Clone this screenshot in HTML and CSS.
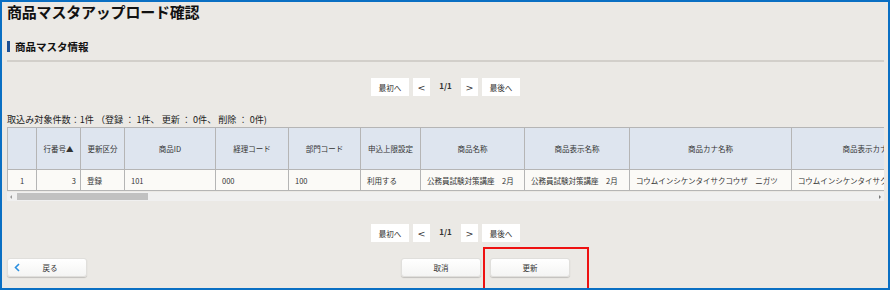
FILE: index.html
```html
<!DOCTYPE html>
<html lang="ja">
<head>
    <meta charset="utf-8">
    <title>商品マスタアップロード確認</title>
    <link rel="stylesheet" href="styles.css">
</head>
<body>
    <div class="page">
        <!-- タイトル -->
        <h1 class="title">商品マスタアップロード確認</h1>

        <!-- セクション見出し -->
        <h2 class="section-title">商品マスタ情報</h2>
        <div class="section-rule"></div>

        <div class="pager pager-top">
            <button class="pager-btn wide">最初へ</button>
            <button class="pager-btn arrow">&lt;</button>
            <span class="pager-count">1/1</span>
            <button class="pager-btn arrow">&gt;</button>
            <button class="pager-btn wide">最後へ</button>
        </div>

        <div class="summary">取込み対象件数：1件 （登録 ： 1件、 更新 ： 0件、 削除 ： 0件)</div>

        <div class="grid-wrap">
            <table class="grid">
                <colgroup>
                    <col style="width:29px">
                    <col style="width:44px">
                    <col style="width:44px">
                    <col style="width:91px">
                    <col style="width:73px">
                    <col style="width:72px">
                    <col style="width:60px">
                    <col style="width:104px">
                    <col style="width:105px">
                    <col style="width:162px">
                    <col style="width:162px">
                </colgroup>
                <thead>
                    <tr>
                        <th></th>
                        <th>行番号▲</th>
                        <th>更新区分</th>
                        <th>商品ID</th>
                        <th>経理コード</th>
                        <th>部門コード</th>
                        <th>申込上限設定</th>
                        <th>商品名称</th>
                        <th>商品表示名称</th>
                        <th>商品カナ名称</th>
                        <th>商品表示カナ名称</th>
                    </tr>
                </thead>
                <tbody>
                    <tr>
                        <td class="center">1</td>
                        <td class="num">3</td>
                        <td>登録</td>
                        <td>101</td>
                        <td>000</td>
                        <td>100</td>
                        <td>利用する</td>
                        <td>公務員試験対策講座　2月</td>
                        <td>公務員試験対策講座　2月</td>
                        <td>コウムインシケンタイサクコウザ　ニガツ</td>
                        <td>コウムインシケンタイサクコウザ　ニガツ</td>
                    </tr>
                </tbody>
            </table>
            <!-- 横スクロールバー -->
            <div class="hscroll">
                <span class="arrow-left"></span>
                <span class="thumb"></span>
                <span class="arrow-right"></span>
            </div>
        </div>

        <div class="pager pager-bottom">
            <button class="pager-btn wide">最初へ</button>
            <button class="pager-btn arrow">&lt;</button>
            <span class="pager-count">1/1</span>
            <button class="pager-btn arrow">&gt;</button>
            <button class="pager-btn wide">最後へ</button>
        </div>

        <div class="footer">
            <button class="btn btn-back">
                <svg class="chev" width="6" height="9" viewBox="0 0 6 9"><polyline points="5,1 1.5,4.5 5,8" fill="none" stroke="#2b8fe0" stroke-width="1.6"/></svg>
                <span>戻る</span>
            </button>
            <div class="actions">
                <button class="btn">取消</button>
                <div class="highlight">
                    <button class="btn">更新</button>
                </div>
            </div>
        </div>
    </div>
</body>
</html>
```

FILE: styles.css
```css
html, body {
    margin: 0;
    padding: 0;
}
body {
    font-family: "Noto Sans CJK JP", "Noto Sans", sans-serif;
    color: #222;
    background: #ebe9e5;
}
.page {
    box-sizing: border-box;
    width: 890px;
    height: 290px;
    border: 2px solid #0a6fc3;
    padding: 0 4px 0 5px;
    background: #ebe9e5;
    overflow: hidden;
}
.title {
    margin: 0;
    font-size: 15px;
    line-height: 20px;
    font-weight: bold;
    color: #111;
    letter-spacing: -0.2px;
}
.section-title {
    margin: 19px 0 0 0;
    border-left: 3px solid #1d4f93;
    padding-left: 5px;
    font-size: 10.5px;
    line-height: 11px;
    font-weight: bold;
    color: #111;
}
.section-rule {
    margin-top: 8px;
    height: 2px;
    background: #d2cfca;
}

/* ページ送り */
.pager {
    display: flex;
    justify-content: center;
    align-items: center;
    gap: 4px;
    height: 18px;
}
.pager-top {
    margin-top: 16px;
}
.pager-bottom {
    margin-top: 23px;
}
.pager-btn {
    height: 18px;
    width: 17px;
    padding: 0;
    border: none;
    background: #fff;
    font-family: inherit;
    font-size: 7.5px;
    color: #333;
    cursor: pointer;
}
.pager-btn.arrow {
    font-size: 9.5px;
    font-family: "DejaVu Sans", sans-serif;
}
.pager-btn.wide {
    width: 38px;
}
.pager-count {
    width: 23px;
    text-align: center;
    font-size: 8px;
    font-weight: bold;
    line-height: 14px;
    margin-top: -3px;
    color: #333;
}

.summary {
    margin-top: 16px;
    font-size: 9.1px;
    line-height: 14px;
    color: #222;
}

/* 一覧 */
.grid-wrap {
    margin-top: 1px;
    width: 877px;
    overflow: hidden;
}
.grid {
    table-layout: fixed;
    border-collapse: collapse;
    width: 946px;
    font-size: 7.5px;
    color: #333;
}
.grid th {
    height: 41px;
    padding: 0;
    background: #dee5ef;
    border: 1px solid #b5b5b5;
    font-weight: normal;
    text-align: center;
    white-space: nowrap;
    overflow: hidden;
}
.grid td {
    height: 20px;
    padding: 0 0 0 6px;
    background: #fbfaf7;
    border: 1px solid #b5b5b5;
    white-space: nowrap;
    overflow: hidden;
}
.grid td.center {
    text-align: center;
    padding: 0;
}
.grid td.num {
    text-align: right;
    padding: 0 4px 0 0;
}

.hscroll {
    position: relative;
    height: 9px;
    margin-top: 1px;
    background: #f0f0f0;
}
.hscroll .thumb {
    position: absolute;
    left: 10px;
    top: 1px;
    width: 131px;
    height: 7px;
    background: #c1c1c1;
}
.hscroll .arrow-left {
    position: absolute;
    left: 3px;
    top: 2.5px;
    border-top: 2px solid transparent;
    border-bottom: 2px solid transparent;
    border-right: 2px solid #999;
}
.hscroll .arrow-right {
    position: absolute;
    right: 3px;
    top: 2.5px;
    border-top: 2px solid transparent;
    border-bottom: 2px solid transparent;
    border-left: 2px solid #777;
}

/* 下部ボタン */
.footer {
    display: flex;
    align-items: center;
    margin-top: 16px;
}
.btn {
    box-sizing: border-box;
    width: 80px;
    height: 19px;
    padding: 0;
    border: 1px solid #e0dfdc;
    border-radius: 3px;
    background: linear-gradient(#ffffff, #f4f4f3);
    box-shadow: 0 1px 1px rgba(0, 0, 0, 0.18);
    font-family: inherit;
    font-size: 7.5px;
    color: #333;
    cursor: pointer;
}
.btn-back {
    display: flex;
    align-items: center;
    padding-left: 6px;
}
.btn-back span {
    flex: 1;
    text-align: center;
    padding-right: 6px;
}
.actions {
    display: flex;
    align-items: center;
    gap: 9px;
    margin-left: 314px;
}
.highlight {
    position: relative;
    display: flex;
}
.highlight::after {
    content: "";
    position: absolute;
    left: -7px;
    top: -11px;
    width: 102px;
    height: 42px;
    border: 2px solid #ee1111;
    pointer-events: none;
}
```
